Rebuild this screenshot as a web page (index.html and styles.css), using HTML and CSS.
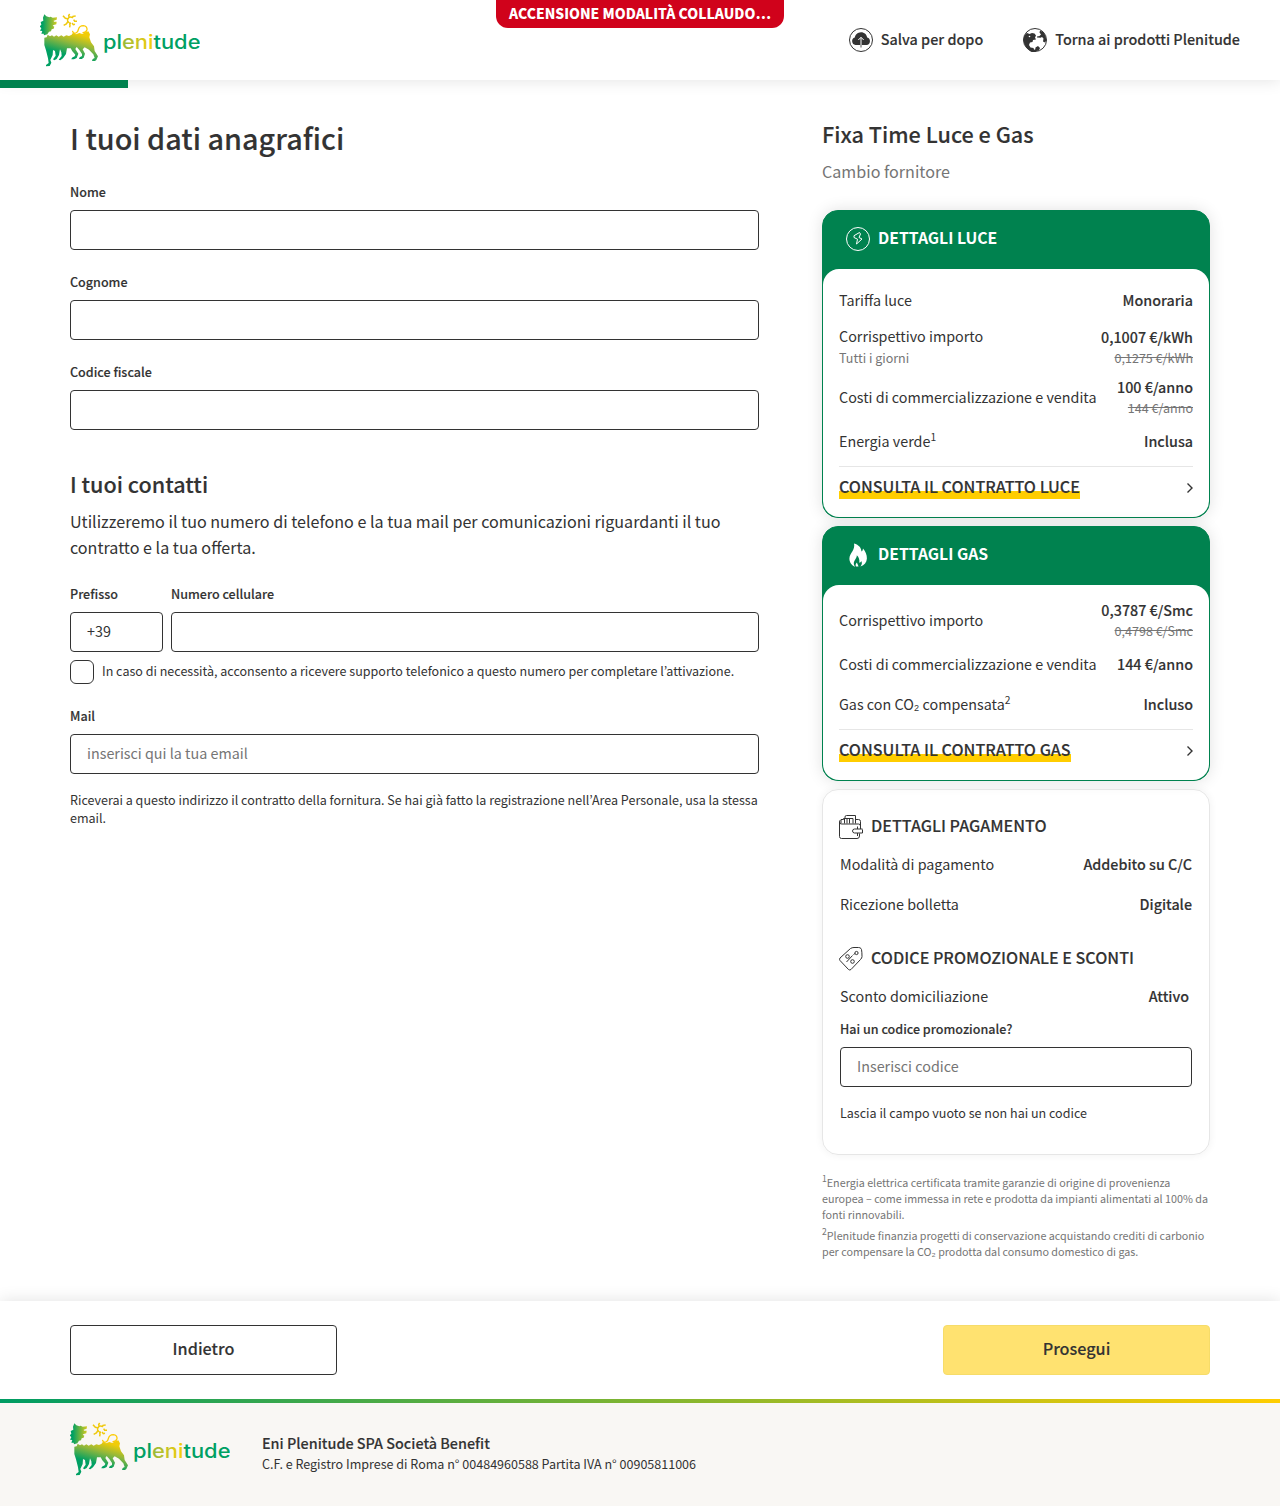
FILE: index.html
```html
<!DOCTYPE html>
<html lang="it">
<head>
<meta charset="utf-8">
<title>Plenitude - I tuoi dati anagrafici</title>
<link rel="stylesheet" href="styles.css">
</head>
<body>
<svg class="defs" width="0" height="0" aria-hidden="true">
  <defs>
    <linearGradient id="body-fill" gradientUnits="userSpaceOnUse" x1="135" y1="84" x2="115" y2="152"><stop offset="0" stop-color="#f0cc08"/><stop offset=".45" stop-color="#8fb73c"/><stop offset="1" stop-color="#00a063"/></linearGradient>
    <linearGradient id="head-fill" gradientUnits="userSpaceOnUse" x1="38" y1="0" x2="82" y2="0"><stop offset="0" stop-color="#00a063"/><stop offset="1" stop-color="#dccb1c"/></linearGradient>
    <linearGradient id="word-fill" gradientUnits="userSpaceOnUse" x1="80" y1="0" x2="113" y2="0"><stop offset="0" stop-color="#8db63f"/><stop offset="1" stop-color="#f8cf0a"/></linearGradient>
    <symbol id="logo" viewBox="0 0 160 54">
      <g transform="translate(-10 -8) scale(.33333)">
        <path fill="url(#head-fill)" d="M43 28L49 34 58 37 62 35 68 38 81 37 80 44 71 47 72 50 80 50 79 58 71 60 68 62 73 65 71 71 65 73 63 79 57 80 52 88 42 91 41 86 34 86 37 78 30 77 34 70 29 64 34 59 32 51 40 47 39 38z"/>
        <path fill="url(#body-fill)" d="M43 98L50 97 53 89 60 94 66 91 72 95 79 91 86 95 94 91 101 95 109 91 117 93 125 89 129 83 138 88 148 84 157 87 166 82 175 79 180 88 178 97 183 112 192 124 194 138 204 154 199 165 195 168H186L188 162 194 159 190 148 177 134 164 127 158 133 165 146 161 158 155 162H147L149 157 156 153 156 147 148 135 140 126 136 132 145 146 140 159 132 163H124L126 158 134 154 136 149 127 139 122 130 111 130 108 147 99 160 91 166 86 164 95 153 94 142 90 133 87 150 80 162 73 166 69 163 77 152 75 138 69 135 68 150 61 165 64 173 59 183 48 184V180L56 174 54 160 48 136 43 120z"/>
        <path fill="none" stroke="#fbcb05" stroke-width="4" stroke-linecap="round" d="M128 79q2 8 10 5 6-3 7-10 3-12 15-12 12 1 11 12-2 9-12 9"/>
        <path fill="none" stroke="#efc90c" stroke-width="4.500" d="M128 38q-6-4-11-1-6 5-4 11 3 7 10 7M113 41l-7-1-7-8M118 38l-2-6 3-5M127 39l2-5 8-1M131 44l3 5h7M126 54l4 5 5-1M119 55l1 6-1 6M113 51l-4 6-8 4"/>
      </g>
      <text class="wordmark" x="63" y="35.500" textLength="97.500" lengthAdjust="spacingAndGlyphs" fill="#00a063">pl<tspan fill="url(#word-fill)">eni</tspan>tude</text>
    </symbol>
    <symbol id="chevron" viewBox="0 0 8 12"><path d="M2.500 1.500L7 6l-4.500 4.500" fill="none" stroke="#333" stroke-width="1.400"/></symbol>
  </defs>
</svg>

<header class="topbar">
  <svg class="logo"><use href="#logo"/></svg>
  <nav class="topnav">
    <a class="toplink">
      <svg class="icon" viewBox="0 0 24 24"><circle cx="12" cy="12" r="11.500" fill="none" stroke="#333"/><path fill="#333" d="M6.500 17a3.800 3.800 0 0 1-.7-7.400C6 7 8.500 4.200 12 4.200s5.700 2.400 6.200 5.200A3.900 3.900 0 0 1 17.500 17z"/><path d="M12 17V9.500M9.300 12L12 9.300l2.700 2.700" fill="none" stroke="#fff" stroke-width="1"/><path d="M12 17v2.500" stroke="#555"/></svg>
      <span class="save-label">Salva per dopo</span>
    </a>
    <a class="toplink">
      <svg class="icon" viewBox="0 0 24 24"><circle cx="12" cy="12" r="11.500" fill="none" stroke="#333"/><path fill="#333" d="M.6 12C.6 8 2 6.500 4 5l2.500 1L9 5l2.500.5 1.500 2-1 2 1 2-3 .5-.5 2-2.500.5-1 2.500 1.500 2.500 3 .5.500 1.500 2 .5-1 3.500C6 23.500.6 18 .6 12zM17 2.500l-.5 2 1.500 2-1.500 1.500-2.500.5v1l3.500.3 1.500-.8 1.500 1.500-.5 3 2 1 1-1.500C23.500 9 22 6 20 4zM12.500 19.500l2.500-1.500 2 2-1 2.500-4 .8z"/><circle cx="6.500" cy="8.500" r=".8" fill="#fff"/></svg>
      <span class="back-label">Torna ai prodotti Plenitude</span>
    </a>
  </nav>
  <div class="test-banner"><span>ACCENSIONE MODALITÀ COLLAUDO…</span></div>
</header>
<div class="progress"></div>

<main class="page">
  <section class="form">
    <h1>I tuoi dati anagrafici</h1>
    <div class="field"><label for="nome">Nome</label><input id="nome"></div>
    <div class="field"><label for="cognome">Cognome</label><input id="cognome"></div>
    <div class="field"><label for="cf">Codice fiscale</label><input id="cf"></div>
    <h2>I tuoi contatti</h2>
    <p class="intro">Utilizzeremo il tuo numero di telefono e la tua mail per comunicazioni riguardanti il tuo<br>contratto e la tua offerta.</p>
    <div class="phone">
      <div class="field prefix"><label for="pre">Prefisso</label><input id="pre" value="+39"></div>
      <div class="field number"><label for="cell">Numero cellulare</label><input id="cell"></div>
    </div>
    <div class="consent"><span class="checkbox"></span><span class="small">In caso di necessità, acconsento a ricevere supporto telefonico a questo numero per completare l’attivazione.</span></div>
    <div class="field"><label for="mail">Mail</label><input id="mail" placeholder="inserisci qui la tua email"></div>
    <p class="small note">Riceverai a questo indirizzo il contratto della fornitura. Se hai già fatto la registrazione nell’Area Personale, usa la stessa<br>email.</p>
  </section>

  <aside class="summary">
    <h2 class="offer">Fixa Time Luce e Gas</h2>
    <p class="offer-type">Cambio fornitore</p>

    <section class="card">
      <h3><svg class="icon" viewBox="0 0 24 24" fill="none" stroke="#fff"><circle cx="12" cy="12" r="11.500"/><path d="M13.500 5.500L8 8.700v1.800l3.500 1.700-1 4.800 5.500-5-3-1.500 1.500-3.500z" stroke-linejoin="round"/></svg><span>DETTAGLI LUCE</span></h3>
      <div class="card-body">
        <div class="row"><span>Tariffa luce</span><b>Monoraria</b></div>
        <div class="row first"><span class="stacked">Corrispettivo importo<small>Tutti i giorni</small></span><b>0,1007 €/kWh<s>0,1275 €/kWh</s></b></div>
        <div class="row double"><span>Costi di commercializzazione e vendita</span><b>100 €/anno<s>144 €/anno</s></b></div>
        <div class="row green"><span>Energia verde<sup>1</sup></span><b>Inclusa</b></div>
        <a class="contract"><span class="mark">CONSULTA IL CONTRATTO LUCE</span><svg class="chevron"><use href="#chevron"/></svg></a>
      </div>
    </section>

    <section class="card gas">
      <h3><svg class="icon" viewBox="0 0 24 24"><path fill="#fff" d="M8 .5c5 1.500 7 4 7.500 8 1-.5 1.300-1.500 1.500-3 2.500 3 4 6 3.900 10-.2 4-2.500 6.500-6.400 8 1.500-2 1.800-3.500.8-5.500-.5 1-1 1.500-2 1.800.4-3-.3-5.500-2.500-7.500.3 3-3 5-3 8 0 1.500.5 2.500 1.500 3.500C5.500 22.500 3.300 19 3.400 15.500 3.600 10 9.500 7 8 .5zM10 23.500c-1-2 0-3 1-4 .2 1.500 1 2 1.500 4z"/></svg><span>DETTAGLI GAS</span></h3>
      <div class="card-body">
        <div class="row double"><span>Corrispettivo importo</span><b>0,3787 €/Smc<s>0,4798 €/Smc</s></b></div>
        <div class="row"><span>Costi di commercializzazione e vendita</span><b>144 €/anno</b></div>
        <div class="row"><span>Gas con CO₂ compensata<sup>2</sup></span><b>Incluso</b></div>
        <a class="contract"><span class="mark">CONSULTA IL CONTRATTO GAS</span><svg class="chevron"><use href="#chevron"/></svg></a>
      </div>
    </section>

    <section class="panel">
      <h3><svg class="icon" viewBox="0 0 24 24" fill="none" stroke="#333"><path d="M21.500 14V6.500q0-2-2-2h-2.500M1.500 5Q.5 5.500.5 7v14.500q0 2 2 2h15.500q2.500 0 2.500-2.500v-2.500M.5 7q0 2 2 2h17q2 0 2 2v3M6 4V2q0-1.500 1.500-1.500h9V8.500M2 8.500V4.500h2.500v-1h9.500v5M5.500 4v4.500M8 4v4.500M10.500 4v4.500M23.500 14.500v3.500h-8q-2-.2-2-2t2-2h8M18.500 14v-2.500M18.500 18v3"/></svg><span>DETTAGLI PAGAMENTO</span></h3>
      <div class="row"><span>Modalità di pagamento</span><b>Addebito su C/C</b></div>
      <div class="row"><span>Ricezione bolletta</span><b>Digitale</b></div>
      <h3 class="promo"><svg class="icon" viewBox="0 0 24 24" fill="none" stroke="#333"><path d="M1 11L11.500 1.500Q13 .5 15 .5h4.500q1.500 0 2.500 1l.5 1q.5 3 .5 7 0 1.500-1.500 3L12 22.500q-1.200 1-2.500 0L1 13.500Q0 12.300 1 11zM7.500 15l6-6.500M14.500 7.500l1.500-1"/><circle cx="8.500" cy="9.500" r="1.800"/><circle cx="13.500" cy="14.500" r="1.800"/><circle cx="17.500" cy="6" r="1.600"/></svg><span>CODICE PROMOZIONALE E SCONTI</span></h3>
      <div class="row discount"><span>Sconto domiciliazione</span><b>Attivo</b></div>
      <div class="field"><label for="promo">Hai un codice promozionale?</label><input id="promo" placeholder="Inserisci codice"></div>
      <p class="small">Lascia il campo vuoto se non hai un codice</p>
    </section>

    <p class="legal"><sup>1</sup>Energia elettrica certificata tramite garanzie di origine di provenienza<br>europea – come immessa in rete e prodotta da impianti alimentati al 100% da<br>fonti rinnovabili.</p>
    <p class="legal"><sup>2</sup>Plenitude finanzia progetti di conservazione acquistando crediti di carbonio<br>per compensare la CO₂ prodotta dal consumo domestico di gas.</p>
  </aside>
</main>

<div class="actions">
  <button class="btn">Indietro</button>
  <button class="btn primary">Prosegui</button>
</div>
<footer class="footer">
  <svg class="logo"><use href="#logo"/></svg>
  <div class="company"><strong>Eni Plenitude SPA Società Benefit</strong><span class="small">C.F. e Registro Imprese di Roma n° 00484960588 Partita IVA n° 00905811006</span></div>
</footer>
</body>
</html>
```
FILE: styles.css
```css
* { box-sizing: border-box; }
body {
  margin: 0;
  background: #fff;
  color: #333;
  font: 400 14.330px/20px "Noto Sans CJK KR", sans-serif;
}
h1, h2, h3, p { margin: 0; }
h1, h2, .panel h3, .mark, .toplink, label, b, .btn, .company strong { -webkit-text-stroke: .12px currentColor; }
.defs { display: block; height: 0; }
.logo { width: 160px; height: 54px; display: block; }
.wordmark { font: 500 19.500px Inter, sans-serif; }
.icon { width: 24px; height: 24px; flex: none; }

.topbar {
  position: relative;
  display: flex;
  justify-content: space-between;
  align-items: center;
  height: 80px;
  padding: 0 40px;
  background: #fff;
  box-shadow: 0 0 16px rgba(0, 0, 0, .12);
}
.topnav { display: flex; gap: 40px; }
.toplink { display: flex; align-items: center; gap: 8px; font-size: 14.380px; font-weight: 500; }
.toplink span { padding-bottom: 2px; }
.test-banner {
  position: absolute;
  top: 0;
  left: 496px;
  width: 288px;
  height: 28px;
  border-radius: 0 0 12px 12px;
  background: #d0021b;
  color: #fff;
  font-weight: 900;
  font-size: 13.920px;
  line-height: 26px;
  text-align: center;
  white-space: nowrap;
}
.progress { position: relative; width: 128px; height: 8px; background: #00824f; }

.page {
  display: flex;
  justify-content: space-between;
  width: 1140px;
  height: 1213px;
  margin: 0 auto;
}
.form { width: 689px; padding-top: 30px; }
h1 { font-size: 28.800px; line-height: 40px; font-weight: 500; margin-bottom: 24px; }
h2 { font-size: 21.600px; line-height: 32px; font-weight: 500; }
.form h2 { margin: 38px 0 8px; }
.intro { font-size: 16.120px; line-height: 26px; margin-bottom: 24px; }
label { display: block; font-size: 12.560px; line-height: 20px; font-weight: 500; margin-bottom: 8px; }
.field + .field { margin-top: 22px; }
input {
  display: block;
  width: 100%;
  height: 40px;
  padding: 0 16px 3px;
  border: 1px solid #333;
  border-radius: 4px;
  background: #fff;
  color: #333;
  font: inherit;
}
input::placeholder { color: #757575; opacity: 1; }
.phone { display: flex; gap: 8px; }
.phone .field { margin: 0; }
.prefix { width: 93px; }
.number { flex: 1; }
.consent { display: flex; align-items: center; gap: 8px; margin: 8px 0 22px; }
.consent .small { padding-bottom: 2px; }
.checkbox { width: 24px; height: 24px; border: 1px solid #333; border-radius: 6px; }
.small { font-size: 12.540px; line-height: 18px; white-space: nowrap; }
.note { margin-top: 17px; }

.summary { width: 388px; padding-top: 30px; }
.offer-type { font-size: 16.120px; line-height: 26px; color: #757575; margin: 8px 0 26px; }
.card {
  border: 1px solid #00824f;
  border-radius: 16px;
  background: #00824f;
  box-shadow: 0 0 16px rgba(0, 0, 0, .12);
  margin-bottom: 8px;
}
h3 { display: flex; align-items: center; gap: 8px; font-size: 16.120px; line-height: 24px; font-weight: 500; }
h3 span { padding-bottom: 4px; }
.card h3 { height: 56px; margin-bottom: 2px; padding: 0 23px; color: #fff; font-size: 15.750px; font-weight: 700; }
.card h3 span { padding-bottom: 2px; }
.card-body { height: 248px; padding: 11px 16px 0; border-radius: 16px; background: #fff; }
.gas .card-body { height: 195px; padding-top: 14px; }
.row { display: flex; justify-content: space-between; align-items: center; height: 40px; white-space: nowrap; }
.row.double { height: 46px; }
.row.first { height: 54px; }
.row.green { padding-top: 2px; }
.stacked small { margin-top: 1px; }
.gas .row.double { height: 42px; margin-bottom: 3px; }
b { font-weight: 500; text-align: right; }
small, s { display: block; font-size: 12.540px; line-height: 21px; font-weight: 400; color: #757575; -webkit-text-stroke: 0; }
sup { font-size: 72%; line-height: 0; vertical-align: baseline; position: relative; top: -.55em; }
.contract {
  display: flex;
  justify-content: space-between;
  align-items: center;
  height: 43px;
  margin-top: 6px;
  border-top: 1px solid #e6e6e6;
}
.gas .contract { margin-top: 5px; }
.mark {
  padding-bottom: 4px;
  font-size: 16.120px;
  font-weight: 500;
  line-height: 24px;
  background: linear-gradient(transparent 17px, #ffcd00 17px 25px, transparent 25px);
}
.chevron { width: 8px; height: 12px; }

.panel {
  height: 366px;
  padding: 24px 17px 0 17px;
  border: 1px solid #e6e6e6;
  border-radius: 16px;
  box-shadow: 0 0 8px rgba(0, 0, 0, .06);
  margin-bottom: 20px;
}
.panel h3 { height: 26px; margin: 0 0 4px -1px; }
.panel .promo { margin-top: 22px; }
.panel .discount { padding-right: 3px; margin-bottom: 3px; }
.panel .small { margin-top: 17px; }
.legal { font-size: 10.750px; line-height: 16px; color: #757575; margin-bottom: 5px; white-space: nowrap; }
.legal sup { font-size: 80%; }

.actions {
  display: flex;
  justify-content: space-between;
  height: 98px;
  padding: 24px 70px;
  background: #fff;
  box-shadow: 0 0 16px rgba(0, 0, 0, .12);
}
.btn {
  width: 267px;
  height: 50px;
  padding: 0 0 5px;
  border: 1px solid #333;
  border-radius: 4px;
  background: #fff;
  color: #333;
  font: 500 16.200px/24px "Noto Sans CJK KR", sans-serif;
}
.primary { border-color: #f6dc69; background: #ffe270; }
.footer {
  position: relative;
  display: flex;
  gap: 32px;
  height: 107px;
  padding: 19px 70px;
  border-top: 4px solid;
  border-image: linear-gradient(90deg, #009c63, #ffcd00) 1;
  background: #f9f7f4;
}
.company { display: flex; flex-direction: column; padding-top: 11px; }
.company strong { font-size: 14.380px; font-weight: 500; line-height: 20px; }
.company .small { margin-top: 2px; }
```
